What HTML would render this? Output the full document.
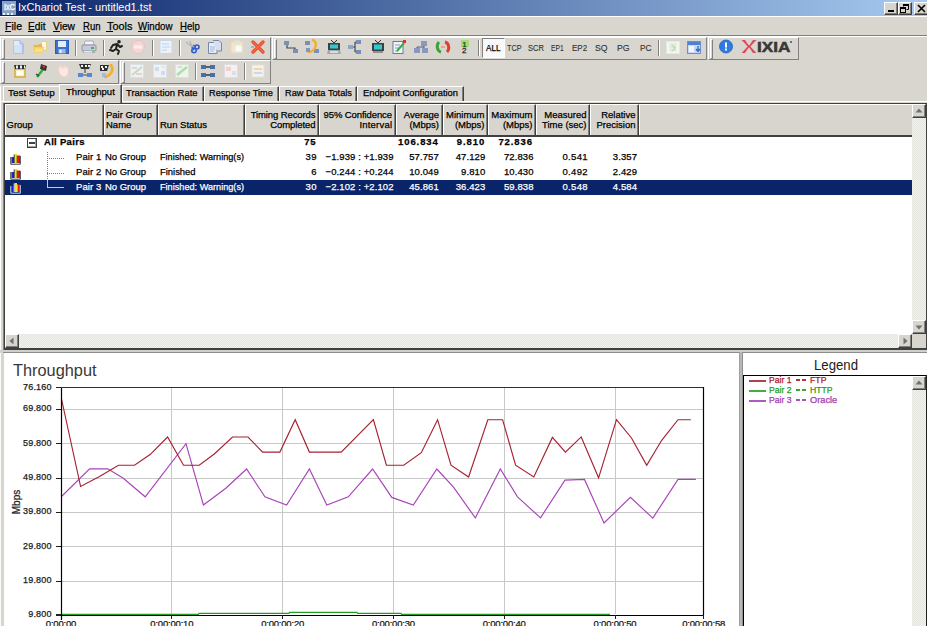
<!DOCTYPE html>
<html><head><meta charset="utf-8">
<style>
*{box-sizing:border-box}
html,body{margin:0;padding:0}
body{width:927px;height:626px;overflow:hidden;position:relative;background:#D8D6CE;font-family:"Liberation Sans",sans-serif;color:#000}
.a{position:absolute}
.t{position:absolute;white-space:pre;line-height:1;-webkit-text-stroke:0.25px currentColor}
.cb{position:absolute;top:2px;width:14px;height:13px;background:#D7D5CD;border-top:1px solid #fff;border-left:1px solid #fff;border-right:1px solid #404040;border-bottom:1px solid #404040;box-shadow:inset -1px -1px 0 #808080}
.tb{position:absolute;border-top:1px solid #fff;border-left:1px solid #fff;border-right:1px solid #808080;border-bottom:1px solid #808080}
.grip{position:absolute;width:3px;border-left:1px solid #fff;border-top:1px solid #fff;border-right:1px solid #808080;border-bottom:1px solid #808080}
.sep{position:absolute;width:2px;border-left:1px solid #808080;border-right:1px solid #fff}
.ic{position:absolute;overflow:visible}
.hd{position:absolute;top:104px;height:32px;background:#D7D5CD;border-left:1px solid #fff;border-top:1px solid #fff;border-right:1px solid #404040;box-shadow:inset -1px 0 0 #808080}
</style></head><body>

<div class="a" style="left:0px;top:0px;width:927px;height:16px;background:linear-gradient(to right,#0A246A,#A6CAF0);"></div>
<div class="a" style="left:2px;top:1px;width:14px;height:14px;background:#8CA2C4;"></div>
<div class="t" style="left:3.5px;top:2.60px;font-size:8.5px;color:#fff;transform:scaleX(0.8627);transform-origin:left center;-webkit-text-stroke:0.3px #fff;">IxC</div>
<div class="a" style="left:3px;top:13px;width:12px;height:2px;background:repeating-linear-gradient(to right,#E8F0FF 0 2px,transparent 2px 4px);"></div>
<div class="t" style="left:18px;top:2.31px;font-size:11.8px;color:#fff;transform:scaleX(0.9351);transform-origin:left center;-webkit-text-stroke:0;">IxChariot Test - untitled1.tst</div>
<div class="cb" style="left:884px"></div>
<div class="cb" style="left:898px"></div>
<div class="cb" style="left:914px;width:16px"></div>
<div class="a" style="left:888px;top:10px;width:6px;height:2px;background:#000;"></div>
<svg class="ic" style="left:900px;top:4px" width="10" height="10"><path d="M3.5 0.5h5v5h-2M3.5 0.5v2" fill="none" stroke="#000"/><rect x="3" y="0" width="6" height="2" fill="#000"/><rect x="0.5" y="3.5" width="5" height="5" fill="none" stroke="#000"/><rect x="0" y="3" width="6" height="2" fill="#000"/></svg>
<svg class="ic" style="left:917px;top:4px" width="10" height="9"><path d="M1 1L8 8M8 1L1 8" stroke="#000" stroke-width="1.6"/></svg>
<div class="a" style="left:0px;top:16px;width:927px;height:1px;background:#fff;"></div>
<div class="t" style="left:5px;top:20.67px;font-size:11.5px;color:#000;transform:scaleX(0.9174);transform-origin:left center;">File</div>
<div class="a" style="left:5px;top:31px;width:6px;height:1px;background:#000;"></div>
<div class="t" style="left:28.3px;top:20.67px;font-size:11.5px;color:#000;transform:scaleX(0.8831);transform-origin:left center;">Edit</div>
<div class="a" style="left:28px;top:31px;width:6px;height:1px;background:#000;"></div>
<div class="t" style="left:53.2px;top:20.67px;font-size:11.5px;color:#000;transform:scaleX(0.8900);transform-origin:left center;">View</div>
<div class="a" style="left:53px;top:31px;width:7px;height:1px;background:#000;"></div>
<div class="t" style="left:82.7px;top:20.67px;font-size:11.5px;color:#000;transform:scaleX(0.8295);transform-origin:left center;">Run</div>
<div class="a" style="left:83px;top:31px;width:7px;height:1px;background:#000;"></div>
<div class="t" style="left:106.5px;top:20.67px;font-size:11.5px;color:#000;transform:scaleX(0.9498);transform-origin:left center;">Tools</div>
<div class="a" style="left:106px;top:31px;width:7px;height:1px;background:#000;"></div>
<div class="t" style="left:138.2px;top:20.67px;font-size:11.5px;color:#000;transform:scaleX(0.8435);transform-origin:left center;">Window</div>
<div class="a" style="left:138px;top:31px;width:10px;height:1px;background:#000;"></div>
<div class="t" style="left:180.1px;top:20.67px;font-size:11.5px;color:#000;transform:scaleX(0.8371);transform-origin:left center;">Help</div>
<div class="a" style="left:180px;top:31px;width:7px;height:1px;background:#000;"></div>
<div class="a" style="left:0px;top:35px;width:927px;height:1px;background:#808080;"></div>
<div class="a" style="left:0px;top:36px;width:927px;height:1px;background:#fff;"></div>
<div class="tb" style="left:0px;top:37px;width:271px;height:23px"></div>
<div class="grip" style="left:2px;top:39px;height:20px"></div>
<div class="tb" style="left:272px;top:37px;width:435px;height:23px"></div>
<div class="grip" style="left:274px;top:39px;height:20px"></div>
<div class="tb" style="left:708px;top:37px;width:91px;height:23px"></div>
<div class="grip" style="left:710px;top:39px;height:20px"></div>
<div class="tb" style="left:0px;top:60px;width:119px;height:24px"></div>
<div class="grip" style="left:2px;top:62px;height:21px"></div>
<div class="tb" style="left:120px;top:60px;width:151px;height:24px"></div>
<div class="grip" style="left:122px;top:62px;height:21px"></div>
<div class="sep" style="left:75px;top:40px;height:16px"></div>
<div class="sep" style="left:103px;top:40px;height:16px"></div>
<div class="sep" style="left:152px;top:40px;height:16px"></div>
<div class="sep" style="left:179px;top:40px;height:16px"></div>
<div class="sep" style="left:478px;top:40px;height:16px"></div>
<div class="sep" style="left:658px;top:40px;height:16px"></div>
<div class="sep" style="left:195px;top:63px;height:17px"></div>
<div class="sep" style="left:244px;top:63px;height:17px"></div>
<svg class="ic" style="left:10px;top:39px" width="16" height="16" viewBox="0 0 16 16"><path d="M3.5 1.5H10L13.5 5V14.5H3.5Z" fill="#E4ECF8" stroke="#B0C4E8"/><path d="M10 1.5V5H13.5" fill="#C0D2F0" stroke="#A0B8E4"/><rect x="4" y="6" width="9" height="8" fill="#D4E2F6"/><rect x="12" y="5" width="1.5" height="9.5" fill="#A8C0EA"/></svg>
<svg class="ic" style="left:32px;top:39px" width="16" height="16" viewBox="0 0 16 16"><path d="M9.5 2.5H14.5V11H9.5Z" fill="#FFF8E4" stroke="#E8C870" stroke-width="0.8"/><path d="M1.5 6H6L7 5H10V13.5H2.5Z" fill="#E6B848"/><path d="M1.5 8H12.5L10 14H2.5Z" fill="#F4D060"/><path d="M3 9.5H11L9.5 13H3Z" fill="#FAE08C"/></svg>
<svg class="ic" style="left:54px;top:39px" width="16" height="16" viewBox="0 0 16 16"><rect x="1.5" y="1.5" width="13" height="13" fill="#3A72D2" stroke="#2A5CB8"/><rect x="4" y="2" width="8" height="6" fill="#E4ECF6"/><rect x="4.5" y="10" width="7" height="4.5" fill="#9EB8E4"/><rect x="5.5" y="11" width="2" height="3" fill="#F0F4FA"/></svg>
<svg class="ic" style="left:81px;top:39px" width="16" height="16" viewBox="0 0 16 16"><path d="M4 2H12L13 6H3Z" fill="#F4F4F4" stroke="#9AA0B0" stroke-width="0.8"/><rect x="1" y="6" width="14" height="6" rx="1" fill="#C8CCD8" stroke="#8088A0" stroke-width="0.8"/><rect x="2" y="11" width="12" height="3" fill="#A8ACBC"/><rect x="10" y="8" width="3" height="2" fill="#30C040"/><rect x="3" y="12" width="8" height="1.5" fill="#E8E8F0"/></svg>
<svg class="ic" style="left:108px;top:39px" width="16" height="16" viewBox="0 0 16 16"><circle cx="11" cy="2.8" r="1.8" fill="#202020"/><path d="M9 5L5 6L3 9M9 5L8 10L11 12L10 15M8 10L5 12L2 11M9 5L12 8L14 7" fill="none" stroke="#202020" stroke-width="2" stroke-linecap="round" stroke-linejoin="round"/></svg>
<svg class="ic" style="left:130px;top:39px" width="16" height="16" viewBox="0 0 16 16"><circle cx="8" cy="8" r="6.5" fill="#F6D6D2" stroke="#F0C0BA"/><rect x="4" y="6.5" width="8" height="3" fill="#FCEEEC"/></svg>
<svg class="ic" style="left:158px;top:39px" width="16" height="16" viewBox="0 0 16 16"><rect x="2" y="1.5" width="12" height="13" fill="#EEF2F8" stroke="#C8D6EA"/><path d="M4 5H11M4 8H12M4 11H9" stroke="#B8D0E8"/></svg>
<svg class="ic" style="left:184px;top:39px" width="16" height="16" viewBox="0 0 16 16"><path d="M2 3L10 9M6 2L9 12" stroke="#B0B4C0" stroke-width="1.2"/><circle cx="10" cy="11.5" r="2.2" fill="none" stroke="#3060D0" stroke-width="1.6"/><circle cx="13" cy="8" r="2" fill="none" stroke="#3060D0" stroke-width="1.6"/><path d="M8 8L10 11M9 6L12 8" stroke="#3060D0" stroke-width="1.4"/></svg>
<svg class="ic" style="left:207px;top:39px" width="16" height="16" viewBox="0 0 16 16"><path d="M1.5 3.5H8L10 5.5V14.5H1.5Z" fill="#E6ECF6" stroke="#7888A8"/><path d="M6 1.5H12L14.5 4V12H10" fill="#D6E0F0" stroke="#7888A8"/><path d="M3 8H8M3 10H8M3 12H7" stroke="#A8B8D8"/></svg>
<svg class="ic" style="left:229px;top:39px" width="16" height="16" viewBox="0 0 16 16"><rect x="2" y="3" width="12" height="11" fill="#F6E6C0" stroke="#EAD8B0"/><rect x="5" y="1.5" width="6" height="3" fill="#E8E0D0"/><rect x="6" y="6" width="7" height="7" fill="#FAFAF8" stroke="#E0E4EC"/></svg>
<svg class="ic" style="left:250px;top:39px" width="16" height="16" viewBox="0 0 16 16"><path d="M3 3L13 13M13 3L3 13" stroke="#E84A2A" stroke-width="3.2" stroke-linecap="round"/><path d="M3 3L13 13M13 3L3 13" stroke="#F26A48" stroke-width="1.4" stroke-linecap="round"/><path d="M1 8H4" stroke="#7090C0" stroke-width="1"/></svg>
<svg class="ic" style="left:283px;top:39px" width="16" height="16" viewBox="0 0 16 16"><rect x="1" y="2" width="5" height="4" fill="#7890B8"/><rect x="10" y="10" width="5" height="4" fill="#7890B8"/><path d="M4 6V9H12V10" fill="none" stroke="#404858" stroke-width="1.2"/></svg>
<svg class="ic" style="left:304px;top:39px" width="16" height="16" viewBox="0 0 16 16"><rect x="1" y="2" width="5" height="4" fill="#7890B8"/><rect x="10" y="10" width="5" height="4" fill="#7890B8"/><path d="M9 1C14 4 12 12 5 13" fill="none" stroke="#F0B030" stroke-width="2.4" stroke-linecap="round"/><rect x="2" y="9" width="4" height="4" fill="#8098C0"/></svg>
<svg class="ic" style="left:326px;top:39px" width="16" height="16" viewBox="0 0 16 16"><path d="M5 1L8 4L11 1" stroke="#303030" fill="none"/><rect x="2" y="4" width="12" height="7" fill="#404040"/><rect x="4" y="5.5" width="8" height="4" fill="#30C8D0"/><path d="M2 11L1 15H15L14 11" fill="#A0A8B0"/><rect x="4" y="12" width="8" height="2" fill="#D8DCE0"/></svg>
<svg class="ic" style="left:347px;top:39px" width="16" height="16" viewBox="0 0 16 16"><rect x="9" y="1" width="5" height="4" fill="#7890B8"/><rect x="9" y="11" width="5" height="4" fill="#7890B8"/><rect x="1" y="6" width="5" height="4" fill="#90A4C4"/><path d="M6 8H8M8 3V13M8 3H9M8 13H9" fill="none" stroke="#404858" stroke-width="1.2"/></svg>
<svg class="ic" style="left:370px;top:39px" width="16" height="16" viewBox="0 0 16 16"><path d="M5 1L8 4L11 1" stroke="#303030" fill="none"/><rect x="2" y="4" width="12" height="8" fill="#404040"/><rect x="4" y="5.5" width="8" height="5" fill="#30C8D0"/><rect x="3" y="12" width="10" height="2" fill="#909090"/></svg>
<svg class="ic" style="left:391px;top:39px" width="16" height="16" viewBox="0 0 16 16"><rect x="2" y="2.5" width="10" height="12" fill="#F0F4FA" stroke="#6878A0"/><path d="M4 6H9M4 9H8M4 12H7" stroke="#9098B8"/><path d="M6 12L13 4" stroke="#30B040" stroke-width="2"/><rect x="12" y="1" width="3" height="3" fill="#E03020"/></svg>
<svg class="ic" style="left:413px;top:39px" width="16" height="16" viewBox="0 0 16 16"><rect x="8" y="2" width="6" height="5" fill="#8898C0"/><rect x="1" y="9" width="6" height="5" fill="#8898C0"/><rect x="9" y="9" width="6" height="5" fill="#8898C0"/><path d="M11 7V9M4 9V8H11" stroke="#505870" fill="none"/></svg>
<svg class="ic" style="left:435px;top:39px" width="16" height="16" viewBox="0 0 16 16"><rect x="2" y="2" width="12" height="12" fill="#D8D8D0"/><path d="M4 3C1 6 2 12 6 13" stroke="#40A040" stroke-width="3" fill="none"/><path d="M12 13C15 10 14 4 10 3" stroke="#E04030" stroke-width="3" fill="none"/><path d="M6 8L10 8" stroke="#F0A090" stroke-width="2"/></svg>
<div class="a" style="left:461px;top:40px;width:8px;height:7px;background:#A8D878;"></div>
<div class="t" style="left:462.5px;top:40.57px;font-size:7px;font-weight:bold;color:#206020;">1</div>
<div class="t" style="left:462px;top:47.23px;font-size:8px;color:#202020;">2</div>
<div class="a" style="left:482px;top:38px;width:23px;height:20px;border-top:1px solid #808080;border-left:1px solid #808080;border-bottom:1px solid #fff;border-right:1px solid #fff;background:repeating-conic-gradient(#F4F3F0 0 25%,#FFFFFF 0 50%) 0 0/2px 2px"></div>
<div class="t" style="left:486px;top:43.51px;font-size:9.2px;color:#000;transform:scaleX(0.8858);transform-origin:left center;">ALL</div>
<div class="t" style="left:506.9px;top:43.51px;font-size:9.2px;color:#303030;transform:scaleX(0.7880);transform-origin:left center;-webkit-text-stroke:0.1px #303030;">TCP</div>
<div class="t" style="left:527.6px;top:43.51px;font-size:9.2px;color:#303030;transform:scaleX(0.8237);transform-origin:left center;-webkit-text-stroke:0.1px #303030;">SCR</div>
<div class="t" style="left:551px;top:43.51px;font-size:9.2px;color:#303030;transform:scaleX(0.7245);transform-origin:left center;-webkit-text-stroke:0.1px #303030;">EP1</div>
<div class="t" style="left:571.8px;top:43.51px;font-size:9.2px;color:#303030;transform:scaleX(0.8741);transform-origin:left center;-webkit-text-stroke:0.1px #303030;">EP2</div>
<div class="t" style="left:595px;top:43.51px;font-size:9.2px;color:#303030;transform:scaleX(0.9479);transform-origin:left center;-webkit-text-stroke:0.1px #303030;">SQ</div>
<div class="t" style="left:616.7px;top:43.51px;font-size:9.2px;color:#303030;transform:scaleX(0.9479);transform-origin:left center;-webkit-text-stroke:0.1px #303030;">PG</div>
<div class="t" style="left:639.6px;top:43.51px;font-size:9.2px;color:#303030;transform:scaleX(0.9076);transform-origin:left center;-webkit-text-stroke:0.1px #303030;">PC</div>
<svg class="ic" style="left:665px;top:39px" width="16" height="16" viewBox="0 0 16 16"><rect x="1.5" y="2.5" width="13" height="12" fill="#F4F6F2" stroke="#E4E8E2"/><path d="M4 5H12M4 8H12M4 11H12M6 4V13M10 4V13" stroke="#D8E8D0"/><path d="M7 6L10 9L7 12" stroke="#B8DCA8" stroke-width="1.5" fill="none"/></svg>
<svg class="ic" style="left:686px;top:39px" width="16" height="16" viewBox="0 0 16 16"><rect x="1.5" y="2.5" width="13" height="12" fill="#C8D8F4" stroke="#6890D0"/><rect x="2" y="3" width="12" height="3" fill="#5080D0"/><rect x="3" y="7" width="5" height="6" fill="#F0F4FC"/><path d="M12 7V12M10 10L12 12.5L14 10" stroke="#3068C0" stroke-width="1.3" fill="none"/></svg>
<svg class="ic" style="left:718px;top:39px" width="16" height="16" viewBox="0 0 16 16"><circle cx="8" cy="7.5" r="6.5" fill="#2E7CE0"/><circle cx="8" cy="7.5" r="6.5" fill="none" stroke="#1A5CC0" stroke-width="0.8"/><rect x="7" y="3.5" width="2" height="5" fill="#fff"/><rect x="7" y="9.5" width="2" height="2" fill="#fff"/></svg>
<svg class="ic" style="left:741px;top:40px" width="16" height="13" viewBox="0 0 16 13"><path d="M0.5 0L4 0C5.5 2 6.5 4 8 5.5C9.5 4 10.5 2 12 0L15.5 0C13 2.5 11 4.5 9.5 6.5C11 8.5 13 10.5 15.5 13L12 13C10.5 11 9.5 9 8 7.5C6.5 9 5.5 11 4 13L0.5 13C3 10.5 5 8.5 6.5 6.5C5 4.5 3 2.5 0.5 0Z" fill="#E04858"/></svg>
<div class="t" style="left:756.5px;top:39.53px;font-size:14.5px;font-weight:bold;color:#383838;transform:scaleX(1.1879);transform-origin:left center;-webkit-text-stroke:0.5px #383838;">IXIA</div>
<div class="a" style="left:790px;top:41px;width:2px;height:2px;background:#707070;"></div>
<svg class="ic" style="left:12px;top:63px" width="16" height="16" viewBox="0 0 16 16"><rect x="3" y="6" width="10" height="8" fill="#F6F0C8" stroke="#D8A820" stroke-width="1.4"/><rect x="5" y="8" width="6" height="4" fill="#FFFFFF"/><path d="M2 2L14 2L13 6L3 6Z" fill="#303030"/><path d="M4 2.5h2v3h-2zM8 2.5h2v3h-2zM12 2.5h1v3h-1z" fill="#F0F0F0"/></svg>
<svg class="ic" style="left:33px;top:63px" width="16" height="16" viewBox="0 0 16 16"><path d="M4 14L12 4" stroke="#30B030" stroke-width="2.4"/><path d="M8 1L14 3L13 8L7 6Z" fill="#303030"/><path d="M9 2L12 3L11 6Z" fill="#E03030"/><path d="M3 11L6 13" stroke="#404040" stroke-width="1.5"/></svg>
<svg class="ic" style="left:55px;top:63px" width="16" height="16" viewBox="0 0 16 16"><path d="M3 4C4 12 6 14 9 14C13 14 14 10 13 4Z" fill="#FBE8E4" stroke="#F2CCC6"/><path d="M5 2L7 6M10 2L9 6" stroke="#F4D8D4" stroke-width="1.5"/></svg>
<svg class="ic" style="left:77px;top:63px" width="16" height="16" viewBox="0 0 16 16"><path d="M2 1H14L12 6H4Z" fill="#303030"/><path d="M4 2h2v2h-2zM8 2h2v2h-2zM11 2h2v2h-2z" fill="#F0F0F0"/><path d="M8 6V10" stroke="#303030"/><rect x="1" y="10" width="5" height="4" fill="#5888D0"/><rect x="10" y="10" width="5" height="4" fill="#5888D0"/><path d="M6 12H10" stroke="#404858"/></svg>
<svg class="ic" style="left:98px;top:63px" width="16" height="16" viewBox="0 0 16 16"><path d="M2 2H11L9 8H2Z" fill="#303030"/><path d="M3 3h2v2h-2zM7 3h2v2h-2zM4 5h2v2h-2z" fill="#F0F0F0"/><path d="M13 2C16 6 14 12 7 14" fill="none" stroke="#F0B030" stroke-width="2.6" stroke-linecap="round"/><rect x="4" y="10" width="4" height="4" fill="#A8B8D8"/></svg>
<svg class="ic" style="left:129px;top:63px" width="16" height="16" viewBox="0 0 16 16"><rect x="1.5" y="1.5" width="13" height="13" fill="#EEF2F4" stroke="#D8E0E8"/><path d="M3 12L13 4" stroke="#C0DCC0" stroke-width="2"/><path d="M3 5H8M7 11H13" stroke="#E8C8C0" stroke-width="1.5"/></svg>
<svg class="ic" style="left:152px;top:63px" width="16" height="16" viewBox="0 0 16 16"><rect x="1.5" y="1.5" width="13" height="13" fill="#F0F2F6" stroke="#D8E0EA"/><path d="M3 4H7V8H3ZM9 8H13V12H9Z" fill="#D0DCEC"/><path d="M10 3L13 5" stroke="#F0D8C8" stroke-width="1.5"/></svg>
<svg class="ic" style="left:174px;top:63px" width="16" height="16" viewBox="0 0 16 16"><rect x="1.5" y="1.5" width="13" height="13" fill="#EEF4EC" stroke="#D8E4D8"/><path d="M3 12L13 4" stroke="#B0DCA8" stroke-width="2.4"/><path d="M4 4H8" stroke="#D8D0C8" stroke-width="1.5"/></svg>
<svg class="ic" style="left:200px;top:63px" width="16" height="16" viewBox="0 0 16 16"><rect x="1" y="2" width="5" height="4" fill="#4870A8"/><rect x="10" y="2" width="5" height="4" fill="#4870A8"/><rect x="1" y="10" width="5" height="4" fill="#4870A8"/><rect x="10" y="10" width="5" height="4" fill="#4870A8"/><path d="M6 4H10M6 12H10" stroke="#303848" stroke-width="1.3"/></svg>
<svg class="ic" style="left:223px;top:63px" width="16" height="16" viewBox="0 0 16 16"><rect x="1.5" y="1.5" width="13" height="13" fill="#F4F0F0" stroke="#E0DCE4"/><path d="M3 4H8V8H3Z" fill="#F4D0C8"/><path d="M9 8H13V12H9Z" fill="#D8E0EC"/></svg>
<svg class="ic" style="left:250px;top:63px" width="16" height="16" viewBox="0 0 16 16"><rect x="2" y="2" width="12" height="12" fill="#F4F2EE" stroke="#E4E0D8"/><path d="M4 6H12" stroke="#F0D8A0" stroke-width="2"/><path d="M4 10H12" stroke="#C8D8F0" stroke-width="2"/></svg>
<div class="a" style="left:0px;top:101px;width:927px;height:1px;background:#fff;"></div>
<div class="a" style="left:3px;top:86px;width:56px;height:15px;background:#D7D5CD;border-top:1px solid #fff;border-left:1px solid #fff;"></div>
<div class="t" style="left:7.5px;top:88.40px;font-size:9.8px;color:#000;transform:scaleX(1.0107);transform-origin:left center;">Test Setup</div>
<div class="a" style="left:59px;top:84px;width:63px;height:19px;background:#D7D5CD;border-top:1px solid #fff;border-left:1px solid #fff;border-right:1px solid #404040;box-shadow:inset -1px 0 0 #808080;"></div>
<div class="t" style="left:66px;top:86.90px;font-size:9.8px;color:#000;transform:scaleX(0.9735);transform-origin:left center;">Throughput</div>
<div class="a" style="left:122px;top:86px;width:82px;height:15px;background:#D7D5CD;border-top:1px solid #fff;border-left:1px solid #fff;border-right:1px solid #404040;box-shadow:inset -1px 0 0 #808080;"></div>
<div class="t" style="left:125.5px;top:88.40px;font-size:9.8px;color:#000;transform:scaleX(0.9641);transform-origin:left center;">Transaction Rate</div>
<div class="a" style="left:204px;top:86px;width:75px;height:15px;background:#D7D5CD;border-top:1px solid #fff;border-left:1px solid #fff;border-right:1px solid #404040;box-shadow:inset -1px 0 0 #808080;"></div>
<div class="t" style="left:208.5px;top:88.40px;font-size:9.8px;color:#000;transform:scaleX(0.9370);transform-origin:left center;">Response Time</div>
<div class="a" style="left:279px;top:86px;width:78px;height:15px;background:#D7D5CD;border-top:1px solid #fff;border-left:1px solid #fff;border-right:1px solid #404040;box-shadow:inset -1px 0 0 #808080;"></div>
<div class="t" style="left:284.5px;top:88.40px;font-size:9.8px;color:#000;transform:scaleX(0.9413);transform-origin:left center;">Raw Data Totals</div>
<div class="a" style="left:357px;top:86px;width:107px;height:15px;background:#D7D5CD;border-top:1px solid #fff;border-left:1px solid #fff;border-right:1px solid #404040;box-shadow:inset -1px 0 0 #808080;"></div>
<div class="t" style="left:362.5px;top:88.40px;font-size:9.8px;color:#000;transform:scaleX(0.9528);transform-origin:left center;">Endpoint Configuration</div>
<div class="a" style="left:4px;top:103px;width:923px;height:1px;background:#404040;"></div>
<div class="a" style="left:4px;top:103px;width:1px;height:247px;background:#404040;"></div>
<div class="a" style="left:3px;top:103px;width:1px;height:247px;background:#808080;"></div>
<div class="a" style="left:0px;top:86px;width:1px;height:264px;background:#FFFFFF;"></div>
<div class="a" style="left:926px;top:103px;width:1px;height:247px;background:#404040;"></div>
<div class="a" style="left:4px;top:348px;width:923px;height:2px;background:#404040;"></div>
<div class="a" style="left:5px;top:104px;width:921px;height:244px;background:#fff;"></div>
<div class="hd" style="left:5px;width:99px;"></div>
<div class="hd" style="left:104px;width:54px;"></div>
<div class="hd" style="left:158px;width:87px;"></div>
<div class="hd" style="left:245px;width:74px;"></div>
<div class="hd" style="left:319px;width:77px;"></div>
<div class="hd" style="left:396px;width:47px;"></div>
<div class="hd" style="left:443px;width:45px;"></div>
<div class="hd" style="left:488px;width:48px;"></div>
<div class="hd" style="left:536px;width:54px;"></div>
<div class="hd" style="left:590px;width:49px;"></div>
<div class="hd" style="left:639px;width:273px;border-right:0;box-shadow:none;"></div>
<div class="a" style="left:5px;top:135px;width:907px;height:2px;background:#404040;"></div>
<div class="t" style="left:6.5px;top:119.76px;font-size:9.5px;color:#000;">Group</div>
<div class="t" style="left:106px;top:109.76px;font-size:9.5px;color:#000;">Pair Group</div>
<div class="t" style="left:106px;top:119.76px;font-size:9.5px;color:#000;">Name</div>
<div class="t" style="left:160px;top:119.76px;font-size:9.5px;color:#000;">Run Status</div>
<div class="t" style="right:611.6px;top:109.76px;font-size:9.5px;color:#000;letter-spacing:-0.1px;">Timing Records</div>
<div class="t" style="right:611.6px;top:119.76px;font-size:9.5px;color:#000;letter-spacing:-0.1px;">Completed</div>
<div class="t" style="right:535.1px;top:109.76px;font-size:9.5px;color:#000;letter-spacing:-0.1px;">95% Confidence</div>
<div class="t" style="right:534.8px;top:119.76px;font-size:9.5px;color:#000;letter-spacing:0.2px;">Interval</div>
<div class="t" style="right:488px;top:109.76px;font-size:9.5px;color:#000;">Average</div>
<div class="t" style="right:488px;top:119.76px;font-size:9.5px;color:#000;">(Mbps)</div>
<div class="t" style="right:442.5px;top:109.76px;font-size:9.5px;color:#000;">Minimum</div>
<div class="t" style="right:442.5px;top:119.76px;font-size:9.5px;color:#000;">(Mbps)</div>
<div class="t" style="right:394.5px;top:109.76px;font-size:9.5px;color:#000;">Maximum</div>
<div class="t" style="right:394.5px;top:119.76px;font-size:9.5px;color:#000;">(Mbps)</div>
<div class="t" style="right:340.5px;top:109.76px;font-size:9.5px;color:#000;">Measured</div>
<div class="t" style="right:340.5px;top:119.76px;font-size:9.5px;color:#000;">Time (sec)</div>
<div class="t" style="right:291.5px;top:109.76px;font-size:9.5px;color:#000;">Relative</div>
<div class="t" style="right:291.5px;top:119.76px;font-size:9.5px;color:#000;">Precision</div>
<div class="a" style="left:912px;top:104px;width:14px;height:244px;background:repeating-conic-gradient(#F2F2EE 0 25%,#E4E4DE 0 50%) 0 0/2px 2px;"></div>
<div class="a" style="left:912px;top:104px;width:14px;height:14px;background:#D7D5CD;border-top:1px solid #fff;border-left:1px solid #fff;border-right:1px solid #404040;border-bottom:1px solid #404040;box-shadow:inset -1px -1px 0 #808080"></div>
<svg class="ic" style="left:915px;top:108px" width="8" height="5"><path d="M4 0.5L0.5 4.5H7.5Z" fill="#707070"/></svg>
<div class="a" style="left:912px;top:320px;width:14px;height:14px;background:#D7D5CD;border-top:1px solid #fff;border-left:1px solid #fff;border-right:1px solid #404040;border-bottom:1px solid #404040;box-shadow:inset -1px -1px 0 #808080"></div>
<svg class="ic" style="left:915px;top:325px" width="8" height="5"><path d="M4 4.5L0.5 0.5H7.5Z" fill="#707070"/></svg>
<div class="a" style="left:5px;top:334px;width:907px;height:14px;background:repeating-conic-gradient(#F2F2EE 0 25%,#E4E4DE 0 50%) 0 0/2px 2px;"></div>
<div class="a" style="left:5px;top:334px;width:14px;height:14px;background:#D7D5CD;border-top:1px solid #fff;border-left:1px solid #fff;border-right:1px solid #404040;border-bottom:1px solid #404040;box-shadow:inset -1px -1px 0 #808080"></div>
<svg class="ic" style="left:9px;top:337px" width="5" height="8"><path d="M0.5 4L4.5 0.5V7.5Z" fill="#707070"/></svg>
<div class="a" style="left:898px;top:334px;width:14px;height:14px;background:#D7D5CD;border-top:1px solid #fff;border-left:1px solid #fff;border-right:1px solid #404040;border-bottom:1px solid #404040;box-shadow:inset -1px -1px 0 #808080"></div>
<svg class="ic" style="left:903px;top:337px" width="5" height="8"><path d="M4.5 4L0.5 0.5V7.5Z" fill="#707070"/></svg>
<div class="a" style="left:912px;top:334px;width:14px;height:14px;background:#D7D5CD;"></div>
<div class="a" style="left:5px;top:180px;width:907px;height:15px;background:#0A246A;"></div>
<div class="a" style="left:27px;top:138px;width:10px;height:10px;border:1px solid #404040;background:#fff;box-shadow:inset -1px -1px 0 #A0A0A0"></div>
<div class="a" style="left:29px;top:142px;width:6px;height:2px;background:#404040;"></div>
<div class="t" style="left:44px;top:137.46px;font-size:9.5px;font-weight:bold;color:#000;letter-spacing:0.3px;">All Pairs</div>
<div class="t" style="right:610.7px;top:137.46px;font-size:9.5px;font-weight:bold;color:#000;letter-spacing:0.8px;">75</div>
<div class="t" style="right:488.3px;top:137.46px;font-size:9.5px;font-weight:bold;color:#000;letter-spacing:0.9px;">106.834</div>
<div class="t" style="right:441.90000000000003px;top:137.46px;font-size:9.5px;font-weight:bold;color:#000;letter-spacing:0.9px;">9.810</div>
<div class="t" style="right:394.1px;top:137.46px;font-size:9.5px;font-weight:bold;color:#000;letter-spacing:0.9px;">72.836</div>
<div class="a" style="left:47px;top:152px;width:1px;height:28px;background:repeating-linear-gradient(to bottom,#808080 0 1px,transparent 1px 2px);"></div>
<div class="a" style="left:47px;top:158px;width:17px;height:1px;background:repeating-linear-gradient(to right,#808080 0 1px,transparent 1px 2px);"></div>
<div class="a" style="left:47px;top:173px;width:17px;height:1px;background:repeating-linear-gradient(to right,#808080 0 1px,transparent 1px 2px);"></div>
<div class="a" style="left:47px;top:180px;width:1px;height:8px;background:#C8C8D8;"></div>
<div class="a" style="left:47px;top:187px;width:17px;height:1px;background:#C8C8D8;"></div>
<svg class="ic" style="left:10px;top:153px" width="11" height="12" viewBox="0 0 11 12"><rect x="1.5" y="4" width="2.5" height="6" fill="#1828D0"/><rect x="4.5" y="1" width="2.5" height="9" fill="#F4E400"/><rect x="7.5" y="2.5" width="2.5" height="7.5" fill="#E01818"/><path d="M0.8 4V11.2H10.5M4.2 1.5V10M7.2 2.5V10M10.3 3V11" fill="none" stroke="#202020" stroke-width="0.9"/></svg>
<div class="t" style="left:76px;top:152.16px;font-size:9.5px;color:#000;letter-spacing:0.1px;">Pair 1</div>
<div class="t" style="left:105px;top:152.16px;font-size:9.5px;color:#000;transform:scaleX(0.9954);transform-origin:left center;">No Group</div>
<div class="t" style="left:159.5px;top:152.16px;font-size:9.5px;color:#000;transform:scaleX(0.9623);transform-origin:left center;">Finished: Warning(s)</div>
<div class="t" style="right:610.0px;top:152.16px;font-size:9.5px;color:#000;letter-spacing:0.5px;">39</div>
<div class="t" style="right:533.4px;top:152.16px;font-size:9.5px;color:#000;letter-spacing:0.1px;">−1.939 : +1.939</div>
<div class="t" style="right:488.09999999999997px;top:152.16px;font-size:9.5px;color:#000;letter-spacing:0.1px;">57.757</div>
<div class="t" style="right:441.7px;top:152.16px;font-size:9.5px;color:#000;letter-spacing:0.1px;">47.129</div>
<div class="t" style="right:393.4px;top:152.16px;font-size:9.5px;color:#000;letter-spacing:0.1px;">72.836</div>
<div class="t" style="right:339.2px;top:152.16px;font-size:9.5px;color:#000;letter-spacing:0.3px;">0.541</div>
<div class="t" style="right:289.9px;top:152.16px;font-size:9.5px;color:#000;letter-spacing:0.1px;">3.357</div>
<svg class="ic" style="left:10px;top:168px" width="11" height="12" viewBox="0 0 11 12"><rect x="1.5" y="4" width="2.5" height="6" fill="#1828D0"/><rect x="4.5" y="1" width="2.5" height="9" fill="#F4E400"/><rect x="7.5" y="2.5" width="2.5" height="7.5" fill="#E01818"/><path d="M0.8 4V11.2H10.5M4.2 1.5V10M7.2 2.5V10M10.3 3V11" fill="none" stroke="#202020" stroke-width="0.9"/></svg>
<div class="t" style="left:76px;top:166.96px;font-size:9.5px;color:#000;letter-spacing:0.1px;">Pair 2</div>
<div class="t" style="left:105px;top:166.96px;font-size:9.5px;color:#000;transform:scaleX(0.9954);transform-origin:left center;">No Group</div>
<div class="t" style="left:159.5px;top:166.96px;font-size:9.5px;color:#000;transform:scaleX(0.9886);transform-origin:left center;">Finished</div>
<div class="t" style="right:610.0px;top:166.96px;font-size:9.5px;color:#000;letter-spacing:0.5px;">6</div>
<div class="t" style="right:533.4px;top:166.96px;font-size:9.5px;color:#000;letter-spacing:0.1px;">−0.244 : +0.244</div>
<div class="t" style="right:488.09999999999997px;top:166.96px;font-size:9.5px;color:#000;letter-spacing:0.1px;">10.049</div>
<div class="t" style="right:441.7px;top:166.96px;font-size:9.5px;color:#000;letter-spacing:0.1px;">9.810</div>
<div class="t" style="right:393.4px;top:166.96px;font-size:9.5px;color:#000;letter-spacing:0.1px;">10.430</div>
<div class="t" style="right:339.2px;top:166.96px;font-size:9.5px;color:#000;letter-spacing:0.3px;">0.492</div>
<div class="t" style="right:289.9px;top:166.96px;font-size:9.5px;color:#000;letter-spacing:0.1px;">2.429</div>
<svg class="ic" style="left:10px;top:182px" width="11" height="12" viewBox="0 0 11 12"><rect x="1.5" y="4" width="2.5" height="6" fill="#1828D0"/><rect x="4.5" y="1" width="2.5" height="9" fill="#F4E400"/><rect x="7.5" y="2.5" width="2.5" height="7.5" fill="#E01818"/><path d="M0.8 4V11.2H10.5M4.2 1.5V10M7.2 2.5V10M10.3 3V11" fill="none" stroke="#E8E8F0" stroke-width="0.9"/></svg>
<div class="t" style="left:76px;top:181.66px;font-size:9.5px;color:#fff;letter-spacing:0.1px;">Pair 3</div>
<div class="t" style="left:105px;top:181.66px;font-size:9.5px;color:#fff;transform:scaleX(0.9954);transform-origin:left center;">No Group</div>
<div class="t" style="left:159.5px;top:181.66px;font-size:9.5px;color:#fff;transform:scaleX(0.9623);transform-origin:left center;">Finished: Warning(s)</div>
<div class="t" style="right:610.0px;top:181.66px;font-size:9.5px;color:#fff;letter-spacing:0.5px;">30</div>
<div class="t" style="right:533.4px;top:181.66px;font-size:9.5px;color:#fff;letter-spacing:0.1px;">−2.102 : +2.102</div>
<div class="t" style="right:488.09999999999997px;top:181.66px;font-size:9.5px;color:#fff;letter-spacing:0.1px;">45.861</div>
<div class="t" style="right:441.7px;top:181.66px;font-size:9.5px;color:#fff;letter-spacing:0.1px;">36.423</div>
<div class="t" style="right:393.4px;top:181.66px;font-size:9.5px;color:#fff;letter-spacing:0.1px;">59.838</div>
<div class="t" style="right:339.2px;top:181.66px;font-size:9.5px;color:#fff;letter-spacing:0.3px;">0.548</div>
<div class="t" style="right:289.9px;top:181.66px;font-size:9.5px;color:#fff;letter-spacing:0.1px;">4.584</div>
<div class="a" style="left:0px;top:350px;width:927px;height:2px;background:#CFCFCB;"></div>
<div class="a" style="left:3px;top:352px;width:924px;height:1px;background:#8C8C8C;"></div>
<div class="a" style="left:0px;top:353px;width:4px;height:273px;background:#D7D5CD;"></div>
<div class="a" style="left:0px;top:353px;width:1px;height:273px;background:#FAFAF6;"></div>
<div class="a" style="left:4px;top:353px;width:735px;height:273px;background:#fff;"></div>
<div class="a" style="left:739px;top:352px;width:4px;height:274px;background:#B8B8B6;"></div>
<div class="a" style="left:739px;top:352px;width:1px;height:274px;background:#A0A0A0;"></div>
<div class="a" style="left:742px;top:352px;width:1px;height:274px;background:#909090;"></div>
<div class="a" style="left:743px;top:353px;width:184px;height:273px;background:#fff;"></div>
<div class="t" style="left:13px;top:361.83px;font-size:16.5px;color:#383838;transform:scaleX(0.9894);transform-origin:left center;-webkit-text-stroke:0;">Throughput</div>
<div class="t" style="left:4px;top:496.5px;font-size:10px;transform:rotate(-90deg);transform-origin:center;width:25px;height:10px;text-align:center;color:#202020">Mbps</div>
<svg class="ic" style="left:0;top:0" width="927" height="626"><line x1="62" y1="409.5" x2="703" y2="409.5" stroke="#C8C8C8" stroke-width="1"/><line x1="56" y1="409.5" x2="61" y2="409.5" stroke="#202020" stroke-width="1"/><line x1="62" y1="443.5" x2="703" y2="443.5" stroke="#C8C8C8" stroke-width="1"/><line x1="56" y1="443.5" x2="61" y2="443.5" stroke="#202020" stroke-width="1"/><line x1="62" y1="478.5" x2="703" y2="478.5" stroke="#C8C8C8" stroke-width="1"/><line x1="56" y1="478.5" x2="61" y2="478.5" stroke="#202020" stroke-width="1"/><line x1="62" y1="512.5" x2="703" y2="512.5" stroke="#C8C8C8" stroke-width="1"/><line x1="56" y1="512.5" x2="61" y2="512.5" stroke="#202020" stroke-width="1"/><line x1="62" y1="546.5" x2="703" y2="546.5" stroke="#C8C8C8" stroke-width="1"/><line x1="56" y1="546.5" x2="61" y2="546.5" stroke="#202020" stroke-width="1"/><line x1="62" y1="581.5" x2="703" y2="581.5" stroke="#C8C8C8" stroke-width="1"/><line x1="56" y1="581.5" x2="61" y2="581.5" stroke="#202020" stroke-width="1"/><line x1="171.5" y1="388" x2="171.5" y2="614" stroke="#C8C8C8" stroke-width="1"/><line x1="282.5" y1="388" x2="282.5" y2="614" stroke="#C8C8C8" stroke-width="1"/><line x1="393.5" y1="388" x2="393.5" y2="614" stroke="#C8C8C8" stroke-width="1"/><line x1="504.5" y1="388" x2="504.5" y2="614" stroke="#C8C8C8" stroke-width="1"/><line x1="615.5" y1="388" x2="615.5" y2="614" stroke="#C8C8C8" stroke-width="1"/><line x1="56" y1="387.5" x2="61" y2="387.5" stroke="#202020"/><line x1="56" y1="615" x2="61" y2="615" stroke="#202020" stroke-width="2"/><polyline points="62,614.4 198.5,614.4 199,613.4 289,613.4 289.5,612.4 357,612.4 357.5,613.4 401,613.4 401.5,614.4 610,614.4" fill="none" stroke="#20A020" stroke-width="1.2"/><polyline points="61.5,496.5 89.6,468.8 107.7,468.8 123.0,478.0 145.2,496.8 186.0,443.7 203.4,505.0 225.8,488.2 246.6,469.0 264.9,496.8 286.6,505.0 309.4,469.0 326.8,505.0 348.3,496.8 372.6,469.0 391.8,497.4 413.3,505.0 436.8,469.0 453.5,487.2 475.3,517.9 500.3,469.0 517.5,496.8 540.5,517.9 565.0,480.1 584.5,479.4 604.0,523.0 630.4,497.3 652.8,518.1 678.0,479.4 695.9,479.4" fill="none" stroke="#A844B8" stroke-width="1.15" stroke-linejoin="miter"/><polyline points="61.5,399.0 80.6,486.5 99.5,476.5 118.5,465.2 134.5,465.2 150.1,454.6 167.6,437.0 183.5,465.2 199.2,465.2 214.3,454.0 232.5,437.0 248.0,437.0 262.6,452.1 279.9,452.1 295.2,419.7 309.4,452.1 341.2,452.1 373.4,419.7 386.4,465.2 403.7,465.2 421.3,452.7 437.6,419.7 451.0,465.2 468.6,477.0 487.8,419.7 502.6,419.7 515.6,465.2 533.8,477.0 552.4,437.4 565.4,452.1 581.2,436.9 598.6,477.8 616.5,419.7 631.5,438.0 646.7,465.3 661.7,440.3 678.0,419.7 690.8,419.7" fill="none" stroke="#A82030" stroke-width="1.15" stroke-linejoin="miter"/><line x1="61.5" y1="387" x2="61.5" y2="620" stroke="#000" stroke-width="1.2"/><line x1="61" y1="387.5" x2="704" y2="387.5" stroke="#303030" stroke-width="1.2"/><line x1="703.5" y1="387" x2="703.5" y2="615" stroke="#000" stroke-width="1.2"/><line x1="61" y1="615.5" x2="704" y2="615.5" stroke="#000" stroke-width="1"/><line x1="171.5" y1="615" x2="171.5" y2="619" stroke="#202020"/><line x1="282.5" y1="615" x2="282.5" y2="619" stroke="#202020"/><line x1="393.5" y1="615" x2="393.5" y2="619" stroke="#202020"/><line x1="504.5" y1="615" x2="504.5" y2="619" stroke="#202020"/><line x1="615.5" y1="615" x2="615.5" y2="619" stroke="#202020"/><line x1="703.5" y1="615" x2="703.5" y2="619" stroke="#202020"/></svg>
<div class="t" style="right:875.3px;top:382.68px;font-size:9px;color:#202020;letter-spacing:0.2px;">76.160</div>
<div class="t" style="right:875.3px;top:404.49px;font-size:9px;color:#202020;letter-spacing:0.2px;">69.800</div>
<div class="t" style="right:875.3px;top:438.77px;font-size:9px;color:#202020;letter-spacing:0.2px;">59.800</div>
<div class="t" style="right:875.3px;top:473.05px;font-size:9px;color:#202020;letter-spacing:0.2px;">49.800</div>
<div class="t" style="right:875.3px;top:507.33px;font-size:9px;color:#202020;letter-spacing:0.2px;">39.800</div>
<div class="t" style="right:875.3px;top:541.62px;font-size:9px;color:#202020;letter-spacing:0.2px;">29.800</div>
<div class="t" style="right:875.3px;top:575.90px;font-size:9px;color:#202020;letter-spacing:0.2px;">19.800</div>
<div class="t" style="right:875.3px;top:610.18px;font-size:9px;color:#202020;letter-spacing:0.2px;">9.800</div>
<div class="t" style="left:21.0px;width:80px;text-align:center;top:618.76px;font-size:9.5px;color:#202020;letter-spacing:-0.2px">0:00:00</div>
<div class="t" style="left:131.8px;width:80px;text-align:center;top:618.76px;font-size:9.5px;color:#202020;letter-spacing:-0.2px">0:00:00:10</div>
<div class="t" style="left:242.6px;width:80px;text-align:center;top:618.76px;font-size:9.5px;color:#202020;letter-spacing:-0.2px">0:00:00:20</div>
<div class="t" style="left:353.4px;width:80px;text-align:center;top:618.76px;font-size:9.5px;color:#202020;letter-spacing:-0.2px">0:00:00:30</div>
<div class="t" style="left:464.2px;width:80px;text-align:center;top:618.76px;font-size:9.5px;color:#202020;letter-spacing:-0.2px">0:00:00:40</div>
<div class="t" style="left:575.0px;width:80px;text-align:center;top:618.76px;font-size:9.5px;color:#202020;letter-spacing:-0.2px">0:00:00:50</div>
<div class="t" style="left:663.6px;width:80px;text-align:center;top:618.76px;font-size:9.5px;color:#202020;letter-spacing:-0.2px">0:00:00:58</div>
<div class="t" style="left:813.7px;top:357.85px;font-size:14px;color:#202020;transform:scaleX(0.9418);transform-origin:left center;-webkit-text-stroke:0;">Legend</div>
<div class="a" style="left:743px;top:375px;width:184px;height:251px;background:#000;"></div>
<div class="a" style="left:744px;top:376px;width:168px;height:250px;background:#fff;"></div>
<div class="a" style="left:912px;top:376px;width:14px;height:250px;background:repeating-conic-gradient(#F2F2EE 0 25%,#E4E4DE 0 50%) 0 0/2px 2px;"></div>
<div class="a" style="left:926px;top:375px;width:1px;height:251px;background:#202020;"></div>
<div class="a" style="left:912px;top:376px;width:14px;height:14px;background:#D7D5CD;border-top:1px solid #fff;border-left:1px solid #fff;border-right:1px solid #404040;border-bottom:1px solid #404040;box-shadow:inset -1px -1px 0 #808080"></div>
<svg class="ic" style="left:915px;top:380px" width="8" height="5"><path d="M4 0.5L0.5 4.5H7.5Z" fill="#707070"/></svg>
<div class="a" style="left:749px;top:380px;width:17px;height:2px;background:#A82028;opacity:0.85;"></div>
<div class="t" style="left:768.7px;top:376.12px;font-size:8.6px;color:#A82028;transform:scaleX(1.0015);transform-origin:left center;">Pair 1</div>
<div class="a" style="left:796px;top:379px;width:4px;height:2px;background:#A82028;opacity:0.9;"></div>
<div class="a" style="left:802px;top:379px;width:4px;height:2px;background:#A82028;opacity:0.9;"></div>
<div class="t" style="left:809.7px;top:376.12px;font-size:8.6px;color:#A82028;transform:scaleX(1.0158);transform-origin:left center;">FTP</div>
<div class="a" style="left:749px;top:390px;width:17px;height:2px;background:#20A020;opacity:0.85;"></div>
<div class="t" style="left:768.7px;top:386.12px;font-size:8.6px;color:#20A020;transform:scaleX(1.0015);transform-origin:left center;">Pair 2</div>
<div class="a" style="left:796px;top:389px;width:4px;height:2px;background:#20A020;opacity:0.9;"></div>
<div class="a" style="left:802px;top:389px;width:4px;height:2px;background:#20A020;opacity:0.9;"></div>
<div class="t" style="left:809.7px;top:386.12px;font-size:8.6px;color:#20A020;transform:scaleX(1.0020);transform-origin:left center;">HTTP</div>
<div class="a" style="left:749px;top:400px;width:17px;height:2px;background:#A040B0;opacity:0.85;"></div>
<div class="t" style="left:768.7px;top:396.12px;font-size:8.6px;color:#A040B0;transform:scaleX(1.0015);transform-origin:left center;">Pair 3</div>
<div class="a" style="left:796px;top:399px;width:4px;height:2px;background:#A040B0;opacity:0.9;"></div>
<div class="a" style="left:802px;top:399px;width:4px;height:2px;background:#A040B0;opacity:0.9;"></div>
<div class="t" style="left:809.7px;top:396.12px;font-size:8.6px;color:#A040B0;transform:scaleX(1.0738);transform-origin:left center;">Oracle</div>
</body></html>
